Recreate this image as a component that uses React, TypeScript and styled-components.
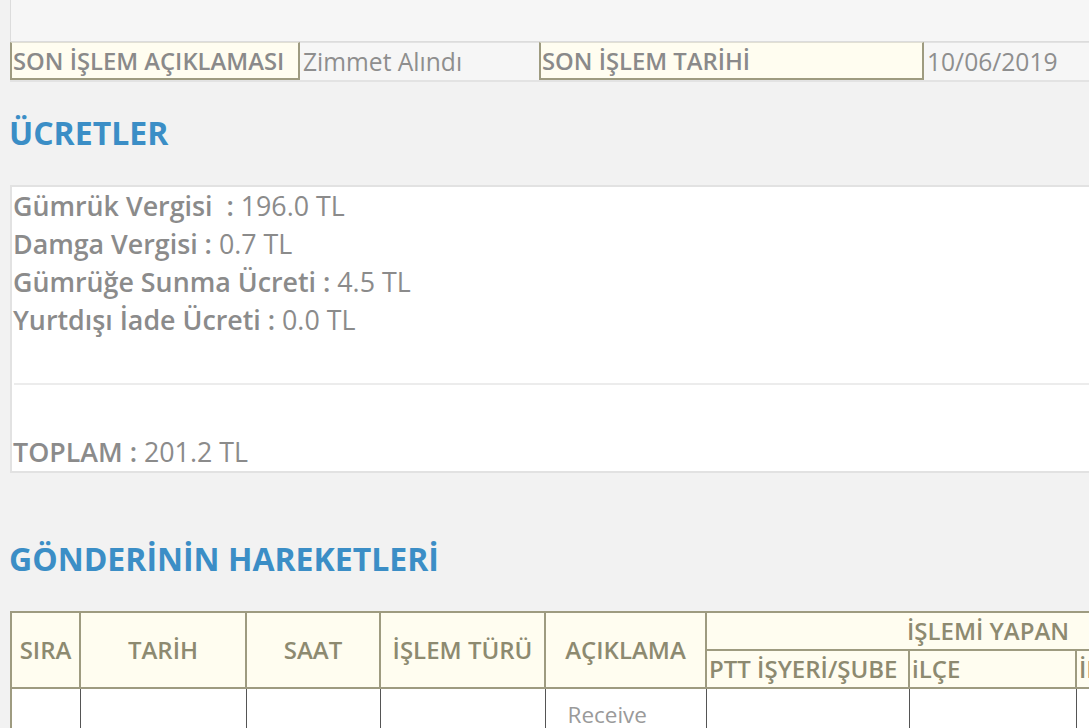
import React from "react";
import styled, { createGlobalStyle } from "styled-components";

const GlobalStyle = createGlobalStyle`
  html, body {
    margin: 0;
    padding: 0;
    background: #f2f2f2;
    overflow: hidden;
  }
  body {
    font-family: "Open Sans", "Noto Sans", sans-serif;
    color: #8b8b8b;
  }
`;

const Page = styled.div`
  width: 1280px;
  padding-left: 10px;
`;

const BlankRow = styled.div`
  height: 41px;
  background: #f6f6f6;
  border-left: 1px solid #dcdcdc;
  border-bottom: 1px solid #dcdcdc;
`;

const InfoRow = styled.div`
  display: grid;
  grid-template-columns: 290px 239px 385px 1fr;
  height: 38px;
  border-bottom: 2px solid #e3e3e3;
`;

const LabelCell = styled.div`
  display: flex;
  align-items: center;
  background: #fffdf0;
  border: 2px solid #9e9b80;
  border-top: 1px solid #e2e0d4;
  padding-left: 1px;
  font-size: 23.8px;
  font-weight: 600;
  color: #8a8a8a;
  white-space: nowrap;
  overflow: hidden;
`;

const ValueCell = styled.div`
  display: flex;
  align-items: center;
  background: #f6f6f6;
  border-top: 1px solid #e2e2e2;
  padding-left: 3px;
  font-size: 24.6px;
  color: #8e8e8e;
  white-space: nowrap;
`;

const Heading = styled.h2<{ $top: number; $bottom: number }>`
  margin: ${(p) => p.$top}px 0 ${(p) => p.$bottom}px -1px;
  font-size: 32px;
  line-height: 40px;
  font-weight: 700;
  color: #3b8ec6;
`;

const FeeBox = styled.div`
  background: #ffffff;
  border: 2px solid #e2e2e2;
  border-right: none;
  padding: 0 0 0 1px;
  height: 284px;
  display: flex;
  flex-direction: column;
`;

const FeeLine = styled.div`
  font-size: 26.8px;
  line-height: 38px;
  color: #8b8b8b;
  white-space: pre;
`;

const FeeLabel = styled.span`
  font-weight: 600;
`;

const Spacer = styled.div<{ $h: number }>`
  height: ${(p) => p.$h}px;
  flex: none;
`;

const Divider = styled.div`
  height: 2px;
  margin: 6px 0 0 1px;
  background: #ececec;
`;

const MovesTable = styled.table`
  border-collapse: collapse;
  table-layout: fixed;
  width: 1259px;
  border: 2px solid #9e9b80;
`;

const Col = styled.col<{ $w: number }>`
  width: ${(p) => p.$w}px;
`;

const HeadCell = styled.th<{ $left?: boolean }>`
  height: 36px;
  padding: 0 2px;
  background: #fffdf0;
  border: 2px solid #9e9b80;
  color: #8d8a70;
  font-size: 24px;
  line-height: 28px;
  font-weight: 600;
  text-align: ${(p) => (p.$left ? "left" : "center")};
  white-space: nowrap;
  overflow: hidden;
`;

const BodyCell = styled.td`
  height: 120px;
  vertical-align: top;
  padding: 11px 0 0 22px;
  background: #ffffff;
  border: 1px solid #555555;
  border-top: none;
  color: #9a9a9a;
  font-size: 22.5px;
  line-height: 30px;
`;

const fees = [
  { label: "Gümrük Vergisi  :", value: " 196.0 TL" },
  { label: "Damga Vergisi :", value: " 0.7 TL" },
  { label: "Gümrüğe Sunma Ücreti :", value: " 4.5 TL" },
  { label: "Yurtdışı İade Ücreti :", value: " 0.0 TL" },
];

const colWidths = [69, 166, 134, 165, 161, 203, 167, 194];

export default function App() {
  return (
    <>
      <GlobalStyle />
      <Page>
        <BlankRow />
        <InfoRow>
          <LabelCell>SON İŞLEM AÇIKLAMASI</LabelCell>
          <ValueCell>Zimmet Alındı</ValueCell>
          <LabelCell>SON İŞLEM TARİHİ</LabelCell>
          <ValueCell>10/06/2019</ValueCell>
        </InfoRow>

        <Heading $top={31} $bottom={32}>ÜCRETLER</Heading>

        <FeeBox>
          {fees.map((f) => (
            <FeeLine key={f.label}>
              <FeeLabel>{f.label}</FeeLabel>
              {f.value}
            </FeeLine>
          ))}
          <Spacer $h={38} />
          <Divider />
          <Spacer $h={48} />
          <FeeLine>
            <FeeLabel>TOPLAM :</FeeLabel> 201.2 TL
          </FeeLine>
        </FeeBox>

        <Heading $top={66} $bottom={32}>GÖNDERİNİN HAREKETLERİ</Heading>

        <MovesTable>
          <colgroup>
            {colWidths.map((w, i) => (
              <Col key={i} $w={w} />
            ))}
          </colgroup>
          <thead>
            <tr>
              <HeadCell rowSpan={2}>SIRA</HeadCell>
              <HeadCell rowSpan={2}>TARİH</HeadCell>
              <HeadCell rowSpan={2}>SAAT</HeadCell>
              <HeadCell rowSpan={2}>İŞLEM TÜRÜ</HeadCell>
              <HeadCell rowSpan={2}>AÇIKLAMA</HeadCell>
              <HeadCell colSpan={3}>İŞLEMİ YAPAN</HeadCell>
            </tr>
            <tr>
              <HeadCell $left>PTT İŞYERİ/ŞUBE</HeadCell>
              <HeadCell $left>iLÇE</HeadCell>
              <HeadCell $left>İL</HeadCell>
            </tr>
          </thead>
          <tbody>
            <tr>
              <BodyCell />
              <BodyCell />
              <BodyCell />
              <BodyCell />
              <BodyCell>Receive</BodyCell>
              <BodyCell />
              <BodyCell />
              <BodyCell />
            </tr>
          </tbody>
        </MovesTable>
      </Page>
    </>
  );
}
